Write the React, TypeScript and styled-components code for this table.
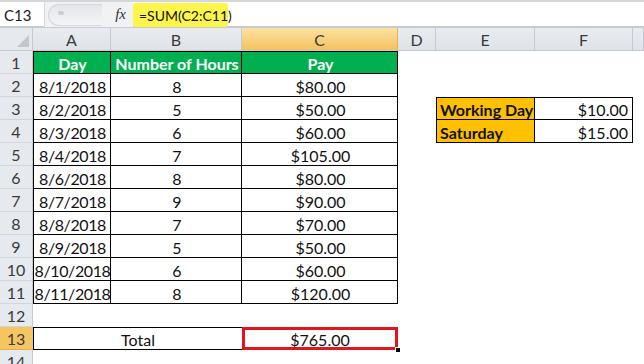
import { Fragment } from "react";
import styled, { createGlobalStyle } from "styled-components";

const GlobalStyle = createGlobalStyle`
  html, body {
    margin: 0;
    padding: 0;
    background: #ffffff;
    overflow: hidden;
  }
  * {
    box-sizing: border-box;
  }
`;

const Sheet = styled.div`
  width: 644px;
  height: 364px;
  overflow: hidden;
  background: #ffffff;
  font-family: Lato, "Liberation Sans", sans-serif;
  color: #111;
`;

const FormulaBar = styled.div`
  display: grid;
  grid-template-columns: 45px 88px 1fr;
  height: 28px;
  border-top: 2px solid #d3d7dc;
  border-bottom: 2px solid #c6cbd1;
  background: #ffffff;
`;

const NameBox = styled.div`
  display: flex;
  align-items: center;
  padding-left: 4px;
  font-size: 15px;
  color: #222;
  border-right: 1px solid #d6d9dd;
`;

const Splitter = styled.div`
  display: flex;
  align-items: center;
  justify-content: space-between;
  padding: 0 7px 0 3px;
  background: #f1f2f4;
`;

const Grip = styled.div`
  width: 54px;
  height: 22px;
  border-radius: 11px 0 0 11px;
  background: linear-gradient(#e4e6e9, #f4f5f6);
  border: 1px solid #d3d6da;
  border-right: none;
  position: relative;
  &::after {
    content: "";
    position: absolute;
    left: 9px;
    top: 6px;
    width: 6px;
    height: 4px;
    border-radius: 3px;
    background: #c9ccd0;
  }
`;

const Fx = styled.span`
  font-family: "Liberation Serif", serif;
  font-style: italic;
  font-size: 15px;
  color: #333;
`;

const FormulaInput = styled.div`
  display: flex;
  align-items: center;
  padding-top: 1px;
`;

const Highlight = styled.span`
  background: #fdf64a;
  height: 24px;
  width: 95px;
  display: flex;
  align-items: center;
  padding-left: 6px;
  border-radius: 3px;
  font-size: 14px;
  color: #111;
`;

const Grid = styled.div`
  display: grid;
  grid-template-columns: 33px 78px 131px 156px 38px 99px 98px 11px;
  grid-auto-rows: 23px;
`;

const Head = styled.div<{ $active?: boolean }>`
  display: flex;
  align-items: center;
  justify-content: center;
  font-size: 16px;
  color: #3a3a3a;
  background: ${(p) =>
    p.$active ? "linear-gradient(#fbe2a0, #f4c260)" : "linear-gradient(#e9ecef, #dfe3e8)"};
  border-right: 1px solid ${(p) => (p.$active ? "#e2b257" : "#c5cad1")};
  border-bottom: 1px solid #c5cad1;
`;

const RowHead = styled.div<{ $active?: boolean }>`
  display: flex;
  align-items: center;
  justify-content: center;
  font-size: 16px;
  color: #3a3a3a;
  background: ${(p) => (p.$active ? "#f5c660" : "#e6e9ed")};
  border-right: 1px solid #c5cad1;
  border-bottom: 1px solid ${(p) => (p.$active ? "#e0b04e" : "#d2d6db")};
`;

const Corner = styled.div`
  display: flex;
  align-items: flex-end;
  justify-content: flex-end;
  padding: 0 3px 3px 0;
  background: #e6e9ed;
  border-right: 1px solid #c5cad1;
  border-bottom: 1px solid #c5cad1;
`;

type Fill = "white" | "green" | "orange";

const fills: Record<Fill, { bg: string; fg: string }> = {
  white: { bg: "#ffffff", fg: "#111111" },
  green: { bg: "#00b050", fg: "#ffffff" },
  orange: { bg: "#ffc000", fg: "#111111" },
};

const Cell = styled.div<{
  $fill?: Fill;
  $align?: "left" | "center" | "right";
  $bold?: boolean;
  $tight?: boolean;
  $edges?: string;
  $span?: number;
}>`
  display: flex;
  align-items: center;
  justify-content: ${(p) =>
    p.$align === "left" ? "flex-start" : p.$align === "right" ? "flex-end" : "center"};
  padding: ${(p) =>
    p.$align === "left" ? "1px 0 0 4px" : p.$align === "right" ? "1px 5px 0 0" : "1px 0 0 1px"};
  font-size: 16px;
  font-weight: ${(p) => (p.$bold ? 700 : 400)};
  letter-spacing: ${(p) => (p.$tight ? "-0.4px" : "normal")};
  white-space: nowrap;
  overflow: hidden;
  background: ${(p) => fills[p.$fill ?? "white"].bg};
  color: ${(p) => fills[p.$fill ?? "white"].fg};
  grid-column: ${(p) => (p.$span ? `span ${p.$span}` : "auto")};
  box-shadow: ${(p) => {
    const e = p.$edges ?? "";
    const s: string[] = [];
    if (e.includes("t")) s.push("inset 0 1px 0 #000");
    if (e.includes("r")) s.push("inset -1px 0 0 #000");
    if (e.includes("b")) s.push("inset 0 -1px 0 #000");
    if (e.includes("l")) s.push("inset 1px 0 0 #000");
    return s.length ? s.join(", ") : "none";
  }};
`;

const Selected = styled.div`
  position: relative;
  display: flex;
  align-items: center;
  justify-content: center;
  padding-top: 1px;
  font-size: 16px;
  border: 3px solid #e3141b;
  background: #ffffff;
`;

const FillHandle = styled.span`
  position: absolute;
  right: -5px;
  bottom: -5px;
  width: 5px;
  height: 5px;
  background: #000;
  border: 1px solid #fff;
  border-right: none;
  border-bottom: none;
`;

const columns = ["A", "B", "C", "D", "E", "F", ""];

const rows = [
  ["8/1/2018", "8", "$80.00"],
  ["8/2/2018", "5", "$50.00"],
  ["8/3/2018", "6", "$60.00"],
  ["8/4/2018", "7", "$105.00"],
  ["8/6/2018", "8", "$80.00"],
  ["8/7/2018", "9", "$90.00"],
  ["8/8/2018", "7", "$70.00"],
  ["8/9/2018", "5", "$50.00"],
  ["8/10/2018", "6", "$60.00"],
  ["8/11/2018", "8", "$120.00"],
];

// rate table lives in E3:F4, keyed by sheet row
const rates: Record<number, [string, string]> = {
  3: ["Working Day", "$10.00"],
  4: ["Saturday", "$15.00"],
};

function RateCells({ row }: { row: number }) {
  const rate = rates[row];
  if (!rate) {
    return (
      <>
        <Cell />
        <Cell />
      </>
    );
  }
  const top = row === 3 ? "t" : "";
  return (
    <>
      <Cell $fill="orange" $align="left" $bold $edges={`${top}lrb`}>
        {rate[0]}
      </Cell>
      <Cell $align="right" $edges={`${top}rb`}>
        {rate[1]}
      </Cell>
    </>
  );
}

function App() {
  return (
    <Sheet>
      <GlobalStyle />
      <FormulaBar>
        <NameBox>C13</NameBox>
        <Splitter>
          <Grip />
          <Fx>fx</Fx>
        </Splitter>
        <FormulaInput>
          <Highlight>=SUM(C2:C11)</Highlight>
        </FormulaInput>
      </FormulaBar>

      <Grid>
        <Corner>
          <svg width="12" height="12" viewBox="0 0 12 12">
            <path d="M12 0 L12 12 L0 12 Z" fill="#c3c8ce" />
          </svg>
        </Corner>
        {columns.map((c, i) => (
          <Head key={i} $active={c === "C"}>
            {c}
          </Head>
        ))}

        <RowHead>1</RowHead>
        <Cell $fill="green" $bold $edges="tlrb">Day</Cell>
        <Cell $fill="green" $bold $edges="trb">Number of Hours</Cell>
        <Cell $fill="green" $bold $edges="trb">Pay</Cell>
        <Cell />
        <Cell />
        <Cell />
        <Cell />

        {rows.map((r, i) => (
          <Fragment key={i}>
            <RowHead>{i + 2}</RowHead>
            <Cell $edges="lrb" $tight>{r[0]}</Cell>
            <Cell $edges="rb">{r[1]}</Cell>
            <Cell $edges="rb">{r[2]}</Cell>
            <Cell />
            <RateCells row={i + 2} />
            <Cell />
          </Fragment>
        ))}

        <RowHead>12</RowHead>
        <Cell $span={7} />

        <RowHead $active>13</RowHead>
        <Cell $span={2} $edges="tlb">Total</Cell>
        <Selected>
          $765.00
          <FillHandle />
        </Selected>
        <Cell $span={4} />

        <RowHead>14</RowHead>
        <Cell $span={7} />
      </Grid>
    </Sheet>
  );
}

export default App;
